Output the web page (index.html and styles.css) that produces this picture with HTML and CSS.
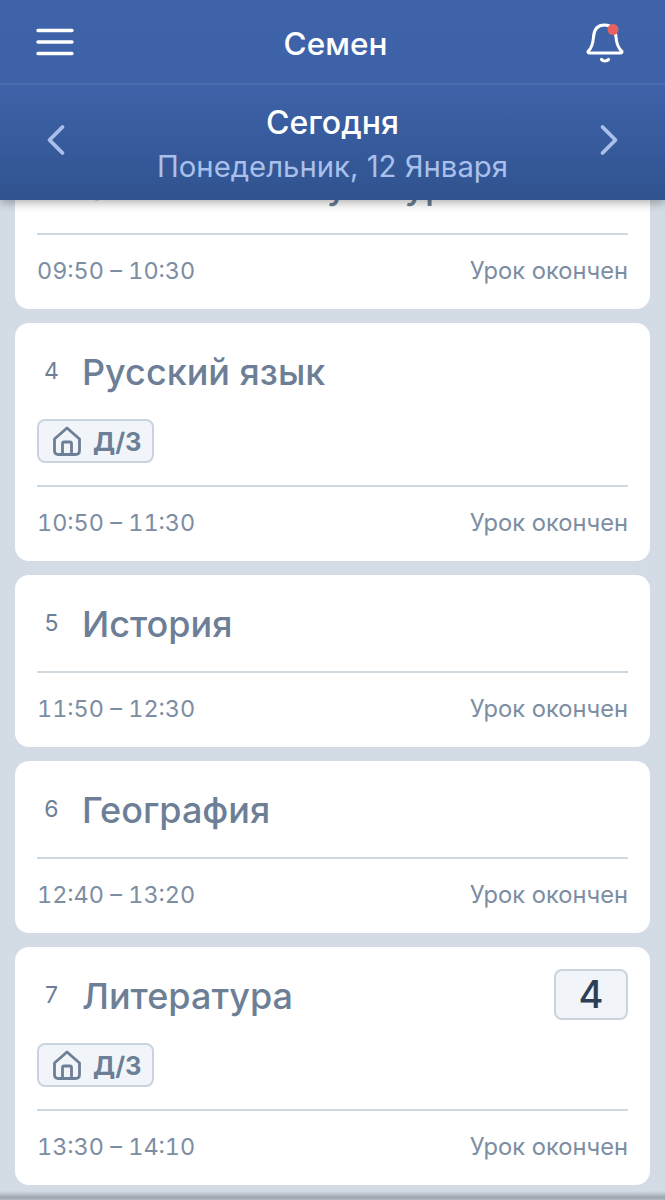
FILE: index.html
```html
<!DOCTYPE html>
<html lang="ru">

<head>
    <meta charset="UTF-8">
    <meta name="viewport" content="width=device-width, initial-scale=1.0">
    <title>Дневник</title>

    <link rel="stylesheet" href="styles.css">
</head>

<body>

    <header class="header">
        <div class="topbar">
            <svg class="menu-icon" width="38" height="28" viewBox="0 0 38 28">
                <path d="M2 2.500H36M2 14H36M2 25.500H36" fill="none" stroke="#fff" stroke-width="3.400" stroke-linecap="round" />
            </svg>
            <div class="topbar-title">Семен</div>
            <svg class="bell-icon" width="40" height="44" viewBox="0 0 40 44">
                <path d="M3 31.500C7 28 8 24 8.500 17C9 9 13 5 19.500 5C26 5 30.500 9 31 17C31.500 24 33 28 37 31.500C37 32.500 36.500 33 35.500 33H4.500C3.500 33 3 32.500 3 31.500Z" fill="none" stroke="#fff" stroke-width="3" stroke-linejoin="round" />
                <path d="M16.500 39.500C18 41.500 22 41.500 23.500 39.500" fill="none" stroke="#fff" stroke-width="3.200" stroke-linecap="round" />
                <circle cx="28" cy="9.500" r="5.500" fill="#e8605f" />
            </svg>
        </div>
        <div class="datebar">
            <svg class="arrow" width="20" height="32" viewBox="0 0 20 32">
                <path d="M16.500 3L3.500 16L16.500 29" fill="none" stroke="#a9c0ec" stroke-width="3.800" stroke-linecap="round" stroke-linejoin="round" />
            </svg>
            <div class="date">
                <div class="date-title">Сегодня</div>
                <div class="date-sub">Понедельник, 12 Января</div>
            </div>
            <svg class="arrow" width="20" height="32" viewBox="0 0 20 32">
                <path d="M3.500 3L16.500 16L3.500 29" fill="none" stroke="#a9c0ec" stroke-width="3.800" stroke-linecap="round" stroke-linejoin="round" />
            </svg>
        </div>
    </header>

    <main class="lessons">
        <section class="card card-cut">
            <div class="card-head">
                <span class="num">3</span>
                <span class="subject">Физическая культура</span>
            </div>
            <div class="card-foot">
                <span class="time">09:50 – 10:30</span>
                <span>Урок окончен</span>
            </div>
        </section>

        <section class="card">
            <div class="card-head">
                <span class="num">4</span>
                <span class="subject">Русский язык</span>
            </div>
            <div class="homework">
                <svg width="32" height="32" viewBox="0 0 32 32">
                    <path d="M3.500 14L16 3L28.500 14V25.500C28.500 28 27 29.500 24.500 29.500H7.500C5 29.500 3.500 28 3.500 25.500Z" fill="none" stroke="#6d7f97" stroke-width="2.800" stroke-linejoin="round" />
                    <path d="M11.500 29.500V18.500C11.500 17.500 12 17 13 17H19C20 17 20.500 17.500 20.500 18.500V29.500" fill="none" stroke="#6d7f97" stroke-width="2.800" />
                </svg>
                Д/З
            </div>
            <div class="card-foot">
                <span class="time">10:50 – 11:30</span>
                <span>Урок окончен</span>
            </div>
        </section>

        <section class="card">
            <div class="card-head">
                <span class="num">5</span>
                <span class="subject">История</span>
            </div>
            <div class="card-foot">
                <span class="time">11:50 – 12:30</span>
                <span>Урок окончен</span>
            </div>
        </section>

        <section class="card">
            <div class="card-head">
                <span class="num">6</span>
                <span class="subject">География</span>
            </div>
            <div class="card-foot">
                <span class="time">12:40 – 13:20</span>
                <span>Урок окончен</span>
            </div>
        </section>

        <section class="card">
            <div class="card-head">
                <span class="num">7</span>
                <span class="subject">Литература</span>
                <span class="grade">4</span>
            </div>
            <div class="homework">
                <svg width="32" height="32" viewBox="0 0 32 32">
                    <path d="M3.500 14L16 3L28.500 14V25.500C28.500 28 27 29.500 24.500 29.500H7.500C5 29.500 3.500 28 3.500 25.500Z" fill="none" stroke="#6d7f97" stroke-width="2.800" stroke-linejoin="round" />
                    <path d="M11.500 29.500V18.500C11.500 17.500 12 17 13 17H19C20 17 20.500 17.500 20.500 18.500V29.500" fill="none" stroke="#6d7f97" stroke-width="2.800" />
                </svg>
                Д/З
            </div>
            <div class="card-foot">
                <span class="time">13:30 – 14:10</span>
                <span>Урок окончен</span>
            </div>
        </section>
    </main>

    <div class="bottom-shadow"></div>

</body>

</html>
```

FILE: styles.css
```css
body {
    position: relative;
    margin: 0;
    height: 1200px;
    overflow: hidden;
    background-color: #d3dce5;
    font-family: Inter, "Noto Sans", sans-serif;
}

.header {
    position: relative;
    z-index: 2;
    height: 200px;
    background: linear-gradient(#3e63a9 0%, #3d62a7 45%, #30538f 100%);
    box-shadow: 0px 3px 9px rgba(0, 0, 0, 0.3);
}

.topbar {
    height: 83px;
    padding: 0 40px 0 36px;
    display: flex;
    align-items: center;
    justify-content: space-between;
    border-bottom: 2px solid #4a6eaf;
}

.menu-icon {
    margin-top: 1px;
}

.topbar-title {
    margin-top: 4px;
    margin-left: 12px;
    color: white;
    font-size: 31.500px;
    font-weight: 500;
}

.datebar {
    height: 115px;
    padding: 0 46px;
    display: flex;
    align-items: center;
    justify-content: space-between;
}

.arrow {
    margin-bottom: 6px;
}

.date {
    padding-top: 4px;
    text-align: center;
}

.date-title {
    color: white;
    font-size: 32px;
    font-weight: 500;
    line-height: 44px;
}

.date-sub {
    color: #a9c0ec;
    font-size: 29.300px;
    line-height: 44px;
    white-space: nowrap;
}

.lessons {
    display: flex;
    flex-direction: column;
    gap: 14.500px;
    padding: 0 15px;
}

.card {
    background: white;
    border-radius: 14px;
    padding: 0 22px;
}

.card-cut {
    margin-top: -63px;
}

.card-head {
    display: flex;
    align-items: center;
    height: 96px;
    padding-top: 2px;
    box-sizing: border-box;
}

.num {
    width: 45px;
    margin-bottom: 3px;
    padding-right: 16px;
    box-sizing: border-box;
    text-align: center;
    color: #6d7f97;
    font-size: 23px;
}

.subject {
    flex: 1;
    color: #6d7f97;
    font-size: 36px;
    font-weight: 500;
    white-space: nowrap;
}

.grade {
    width: 74px;
    height: 51px;
    margin-bottom: 4px;
    box-sizing: border-box;
    background: #f1f5f9;
    border: 2px solid #c9d4df;
    border-radius: 8px;
    text-align: center;
    line-height: 47px;
    color: #2c3e55;
    font-size: 38px;
    font-weight: 500;
}

.homework {
    display: flex;
    align-items: center;
    gap: 10px;
    width: 101px;
    height: 40px;
    margin-bottom: 22px;
    padding-left: 12px;
    background: #f1f5f9;
    border: 2px solid #c9d4df;
    border-radius: 8px;
    color: #6d7f97;
    font-size: 25.500px;
    font-weight: 700;
}

.card-foot {
    display: flex;
    justify-content: space-between;
    align-items: center;
    height: 71.500px;
    padding-bottom: 2px;
    border-top: 2px solid #cfd8df;
    color: #7d8da2;
    font-size: 23.700px;
}

.time {
    font-size: 23.400px;
    font-variant-numeric: tabular-nums;
}

.bottom-shadow {
    position: absolute;
    left: 0;
    right: 0;
    bottom: 0;
    height: 9px;
    background: linear-gradient(rgba(120, 125, 130, 0), rgba(120, 125, 130, 0.6) 75%, rgba(120, 125, 130, 0.35));
}
```
